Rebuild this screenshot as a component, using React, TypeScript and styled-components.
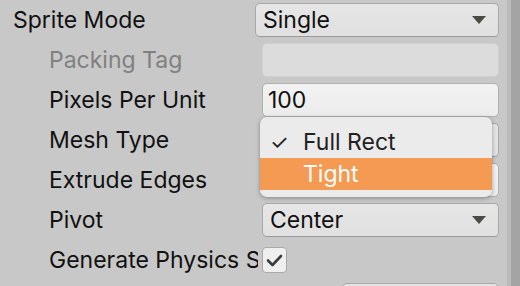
import React from 'react';
import styled, { createGlobalStyle } from 'styled-components';

const GlobalStyle = createGlobalStyle`
  html, body {
    margin: 0;
    padding: 0;
    width: 520px;
    height: 286px;
    overflow: hidden;
    background: #c8c8c8;
    font-family: Inter, "Noto Sans", sans-serif;
  }
`;

const Window = styled.div`
  display: flex;
  width: 520px;
  height: 286px;
  overflow: hidden;
`;

const Inspector = styled.div`
  position: relative;
  width: 507px;
  display: flex;
  flex-direction: column;
`;

const ScrollEdge = styled.div`
  display: flex;
  flex: 1;
  & > div:first-child { width: 4px; background: #bbbbbb; }
  & > div:last-child { flex: 1; background: #a4a4a4; }
`;

const Row = styled.div`
  height: 40px;
  display: flex;
  align-items: center;
  flex-shrink: 0;
`;

const Label = styled.div<{ $indent?: boolean; $disabled?: boolean }>`
  width: ${p => (p.$indent ? 209 : 238)}px;
  padding-left: ${p => (p.$indent ? 49 : 13)}px;
  margin-right: 4px;
  font-size: 23px;
  color: ${p => (p.$disabled ? '#808080' : '#111')};
  white-space: nowrap;
  overflow: hidden;
  flex-shrink: 0;
`;

const Field = styled.div`
  flex: 1;
  margin-right: 8px;
  height: 34px;
  box-sizing: border-box;
  display: flex;
  align-items: center;
  font-size: 23px;
  color: #111;
`;

const Popup = styled(Field)`
  background: linear-gradient(#e6e6e6, #e0e0e0);
  border: 1px solid #a8a8a8;
  border-bottom-color: #999;
  border-radius: 5px;
  padding: 0 12px 0 7px;
  justify-content: space-between;
`;

const TextInput = styled(Field)<{ $disabled?: boolean }>`
  background: ${p => (p.$disabled ? '#dcdcdc' : 'linear-gradient(#f2f2f2, #ececec)')};
  border: 1px solid ${p => (p.$disabled ? '#d0d0d0' : '#b0b0b0')};
  border-radius: 5px;
  padding: 0 5px;
`;

const Arrow = styled.span`
  width: 0;
  height: 0;
  margin-left: auto;
  border-left: 7px solid transparent;
  border-right: 7px solid transparent;
  border-top: 8px solid #4a4a45;
`;

const Checkbox = styled.div`
  width: 25px;
  height: 26px;
  box-sizing: border-box;
  background: #efefef;
  border: 1px solid #a8a8a8;
  border-radius: 4px;
  display: flex;
  align-items: center;
  justify-content: center;
`;

const ButtonRow = styled(Row)`
  justify-content: flex-end;
`;

const Button = styled.div`
  width: 157px;
  height: 34px;
  margin-right: 8px;
  box-sizing: border-box;
  background: #e4e4e4;
  border: 1px solid #a8a8a8;
  border-radius: 5px;
  font-size: 23px;
  display: flex;
  align-items: center;
  justify-content: center;
`;

const Menu = styled.div`
  position: absolute;
  left: 260px;
  top: 117px;
  width: 232px;
  padding: 9px 0 7px;
  box-sizing: border-box;
  background: #ebebeb;
  border-radius: 7px;
  box-shadow: 0 1px 4px rgba(0, 0, 0, 0.35);
`;

const MenuItem = styled.div<{ $active?: boolean }>`
  height: 32px;
  display: flex;
  align-items: center;
  font-size: 23px;
  background: ${p => (p.$active ? '#f59a52' : 'transparent')};
  color: ${p => (p.$active ? '#fff' : '#222')};
`;

const Tick = styled.span`
  width: 43px;
  padding-left: 10px;
  box-sizing: border-box;
  font-size: 21px;
`;

const CheckIcon = () => (
  <svg width="17" height="13" viewBox="0 0 17 13">
    <path d="M2 6.5 L6.5 11 L15 2" fill="none" stroke="#3c3c3c" strokeWidth="2.6" strokeLinecap="round" strokeLinejoin="round" />
  </svg>
);

export default function App() {
  return (
    <Window>
      <GlobalStyle />
      <Inspector>
        <Row>
          <Label>Sprite Mode</Label>
          <Popup>Single<Arrow /></Popup>
        </Row>
        <Row>
          <Label $indent $disabled>Packing Tag</Label>
          <TextInput $disabled />
        </Row>
        <Row>
          <Label $indent>Pixels Per Unit</Label>
          <TextInput>100</TextInput>
        </Row>
        <Row>
          <Label $indent>Mesh Type</Label>
          {/* value hidden under the open menu */}
          <Popup><Arrow /></Popup>
        </Row>
        <Row>
          <Label $indent>Extrude Edges</Label>
          <TextInput />
        </Row>
        <Row>
          <Label $indent>Pivot</Label>
          <Popup>Center<Arrow /></Popup>
        </Row>
        <Row>
          <Label $indent>Generate Physics Shape</Label>
          <Checkbox><CheckIcon /></Checkbox>
        </Row>
        <ButtonRow>
          <Button />
        </ButtonRow>

        <Menu>
          <MenuItem><Tick>✓</Tick>Full Rect</MenuItem>
          <MenuItem $active><Tick />Tight</MenuItem>
        </Menu>
      </Inspector>
      <ScrollEdge><div /><div /></ScrollEdge>
    </Window>
  );
}
